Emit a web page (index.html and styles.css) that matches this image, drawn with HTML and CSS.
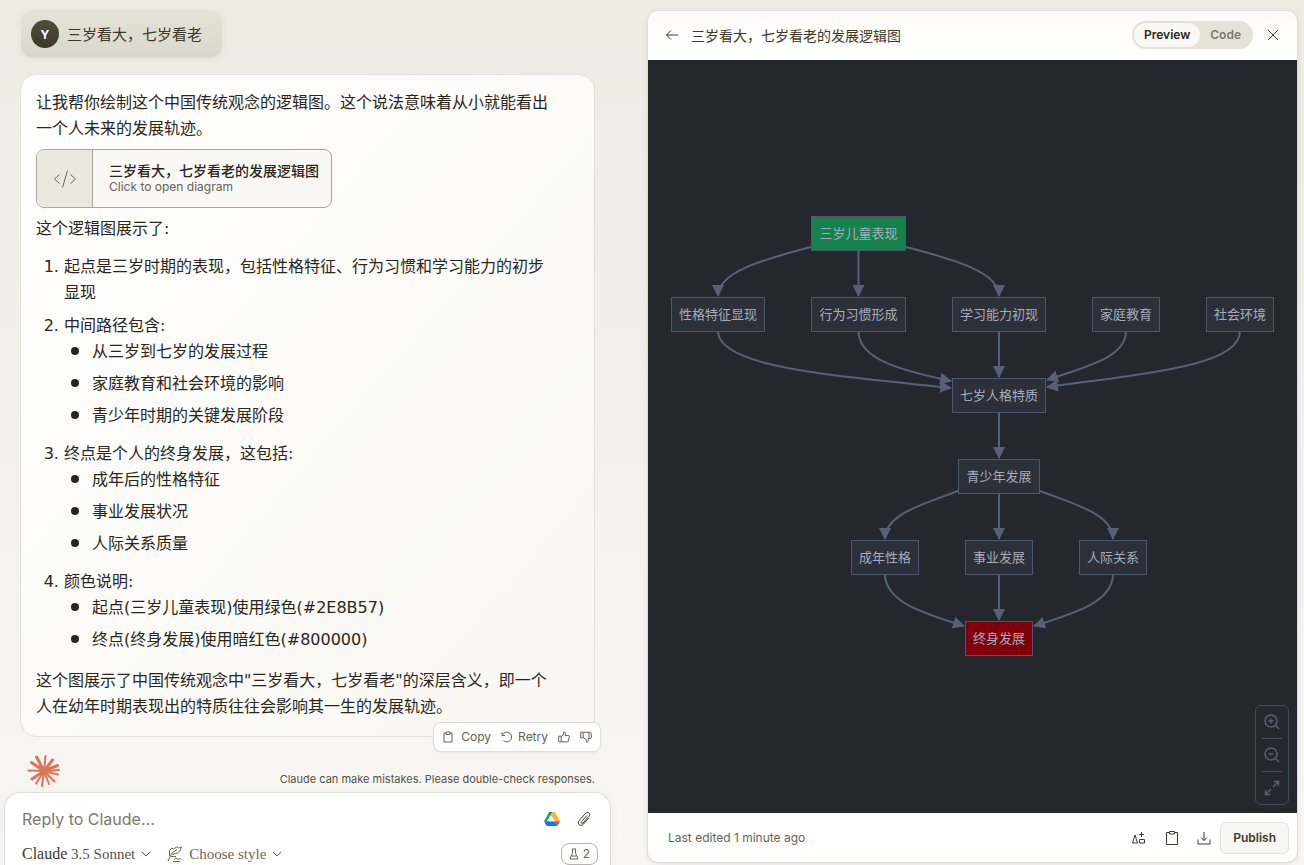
FILE: index.html
```html
<!DOCTYPE html>
<html lang="zh-CN">
<head>
<meta charset="utf-8">
<title>三岁看大，七岁看老</title>
<link rel="stylesheet" href="styles.css">
</head>
<body>
<div class="app">
  <main class="chat">
    <div class="thread">
      <div class="user-message"><span class="avatar">Y</span><span>三岁看大，七岁看老</span></div>
      <article class="reply">
        <p>让我帮你绘制这个中国传统观念的逻辑图。这个说法意味着从小就能看出一个人未来的发展轨迹。</p>
        <button class="artifact" type="button">
          <span class="artifact-icon">
            <svg width="24" height="20" viewBox="0 0 24 20"><path d="M6.500 5.500L1.500 10l5 4.500M17.500 5.500l5 4.500-5 4.500M14.500 1.500l-5 17"/></svg>
          </span>
          <span class="artifact-text"><strong>三岁看大，七岁看老的发展逻辑图</strong><small>Click to open diagram</small></span>
        </button>
        <p>这个逻辑图展示了:</p>
        <ol>
          <li>起点是三岁时期的表现，包括性格特征、行为习惯和学习能力的初步显现</li>
          <li>中间路径包含:
            <ul><li>从三岁到七岁的发展过程</li><li>家庭教育和社会环境的影响</li><li>青少年时期的关键发展阶段</li></ul>
          </li>
          <li>终点是个人的终身发展，这包括:
            <ul><li>成年后的性格特征</li><li>事业发展状况</li><li>人际关系质量</li></ul>
          </li>
          <li>颜色说明:
            <ul><li>起点(三岁儿童表现)使用绿色(#2E8B57)</li><li>终点(终身发展)使用暗红色(#800000)</li></ul>
          </li>
        </ol>
        <p>这个图展示了中国传统观念中"三岁看大，七岁看老"的深层含义，即一个人在幼年时期表现出的特质往往会影响其一生的发展轨迹。</p>
        <div class="actions">
          <button type="button"><svg width="12" height="12" viewBox="0 0 12 12"><path d="M4 2H2v9h8V2H8M4 1h4v2.500H4z"/></svg><span class="copy-label">Copy</span></button>
          <button type="button"><svg width="12" height="12" viewBox="0 0 12 12"><path d="M1 1.500V4.500h3M1.300 4.300A4.800 4.800 0 1 1 2.500 9.500"/></svg><span>Retry</span></button>
          <button type="button" aria-label="Good response"><svg width="12" height="12" viewBox="0 0 12 12"><path d="M.7 5.200h2.500v5.600H.7zM3.200 5.500l2-1.500.6-3c1.400-.2 1.900.8 1.700 1.800l-.4 1.700h3.600c.6 0 .8.400.6 1l-1 4.500c-.1.500-.4.800-1 .8H3.200"/></svg></button>
          <button type="button" aria-label="Bad response"><svg width="12" height="12" viewBox="0 0 12 12"><path d="M.7 1.200h2.500v5.600H.7zM3.200 1.300h6.500c.9 0 1.300.3 1.400 1l.4 4.200c0 .7-.3 1-.9 1H8.300v1.700c0 1.200-.5 2-1.600 2l-.8-2.800L3.200 6.700M9 1.300v6"/></svg></button>
        </div>
      </article>
      <div class="status">
        <svg class="burst" width="34" height="34" viewBox="-17 -17 34 34"><path class="thick" d="M0 0L-7.500-14M0 0L8.500-11M0 0L13.500-5.500M0 0L-12.500-8.500M0 0L-12 8"/><path d="M0 0L1.500-15M0 0L15-1M0 0L14 3.500M0 0L10.500 10.500M0 0L5 13M0 0L-2 15M0 0L-8 12.500M0 0L-15.500-.5"/></svg>
        <span>Claude can make mistakes. Please double-check responses.</span>
      </div>
    </div>
    <form class="composer">
      <div class="row">
        <input type="text" aria-label="Reply to Claude" placeholder="Reply to Claude...">
        <button type="button" aria-label="Add from Google Drive"><svg class="drive" width="16" height="14" viewBox="0 0 16 14"><path fill="#11a35a" d="M5.300 0h3L2.800 9.300 0 9.300z"/><path fill="#087c3c" d="M5.300 0h5.400L8 4.700z"/><path fill="#ffb52b" d="M10.700 0L16 9.300h-5.300L6.600 2.300 8 0z"/><path fill="#0877ff" d="M2.700 9.300h8L13.300 14H2.700L0 9.300z"/><path fill="#ee3d3a" d="M10.700 9.300H16L13.300 14z"/><path fill="#fff" d="M8 4.700l2.700 4.600H5.300z"/></svg></button>
        <button type="button" aria-label="Attach file"><svg class="clip" width="16" height="16" viewBox="0 0 16 16"><path d="M11 4.500L5.500 10.800c-.9 1.200.5 2.300 1.500 1.200l6-6.800c2-2.500-1.200-5.300-3.400-2.900L3.200 9.500c-2.700 3.200 1.400 6.800 4.200 3.600L13 6.800"/></svg></button>
      </div>
      <div class="row tools">
        <button type="button" class="model"><span><b>Claude</b> 3.5 Sonnet</span><svg width="10" height="6" viewBox="0 0 10 6"><path d="M1 1l4 4 4-4"/></svg></button>
        <button type="button" class="style"><svg width="16" height="16" viewBox="0 0 16 16"><path d="M1 15L5 7M2.500 10V4.500L5 2l1.500 1L10 .8 11.500 2 14.500 1l-1.500 4-3 2.500-5 .7M5 7l5-3.500M4 10.500h5M7 13.500l2-1.500 2 1.500 1.500-1 2 1M6 15.500h7"/></svg><span>Choose style</span><svg width="10" height="6" viewBox="0 0 10 6"><path d="M1 1l4 4 4-4"/></svg></button>
        <button type="button" class="flask"><svg width="10" height="12" viewBox="0 0 10 12"><path d="M3 1h4M3.500 1v4L1 11h8L6.500 5V1M2.500 8h5"/></svg><span>2</span></button>
      </div>
    </form>
  </main>

  <section class="panel">
    <header class="panel-head">
      <button type="button" aria-label="Back"><svg width="14" height="12" viewBox="0 0 14 12"><path d="M6 1.500L1.500 6 6 10.500M1.500 6H13"/></svg></button>
      <h1>三岁看大，七岁看老的发展逻辑图</h1>
      <div class="tabs"><button type="button" class="active">Preview</button><button type="button">Code</button></div>
      <button type="button" class="close" aria-label="Close"><svg width="12" height="12" viewBox="0 0 12 12"><path d="M1 1l10 10M11 1L1 11"/></svg></button>
    </header>
    <div class="canvas">
      <svg class="diagram" viewBox="0 0 649 753" role="img" aria-label="发展逻辑图">
        <defs><marker id="arrow" viewBox="0 0 12 12" refX="11" refY="6" markerWidth="12" markerHeight="12" markerUnits="userSpaceOnUse" orient="auto"><path d="M0 0L12 6 0 12z"/></marker></defs>
        <g class="edges">
          <path d="M163 187C118 199 70 211 70 236"/><path d="M210.500 190V236"/><path d="M258 187C303 199 351 211 351 236"/>
          <path d="M70 271C70 308 190 316 303 328"/><path d="M210.500 271C210.500 299 251 310 303 321"/><path d="M351 271V317"/><path d="M478 271C478 298 437 307 399 320"/><path d="M592 271C592 305 508 312 399 327"/>
          <path d="M351 352V398"/>
          <path d="M310 431C276 444 237 454 237 479"/><path d="M351 433V479"/><path d="M392 431C426 444 465 454 465 479"/>
          <path d="M237 514C237 542 275 553 316 566"/><path d="M351 514V560"/><path d="M465 514C465 542 427 553 386 566"/>
        </g>
        <g class="nodes">
          <rect class="start" x="163.500" y="156.500" width="94" height="34"/><text x="210.500" y="178">三岁儿童表现</text>
          <rect x="23.500" y="237.500" width="93" height="34"/><text x="70" y="259">性格特征显现</text>
          <rect x="163.500" y="237.500" width="94" height="34"/><text x="210.500" y="259">行为习惯形成</text>
          <rect x="304.500" y="237.500" width="93" height="34"/><text x="351" y="259">学习能力初现</text>
          <rect x="444.500" y="237.500" width="67" height="34"/><text x="478" y="259">家庭教育</text>
          <rect x="558.500" y="237.500" width="67" height="34"/><text x="592" y="259">社会环境</text>
          <rect x="304.500" y="318.500" width="93" height="34"/><text x="351" y="340">七岁人格特质</text>
          <rect x="310.500" y="399.500" width="81" height="34"/><text x="351" y="421">青少年发展</text>
          <rect x="203.500" y="480.500" width="67" height="34"/><text x="237" y="502">成年性格</text>
          <rect x="317.500" y="480.500" width="67" height="34"/><text x="351" y="502">事业发展</text>
          <rect x="431.500" y="480.500" width="67" height="34"/><text x="465" y="502">人际关系</text>
          <rect class="end" x="317.500" y="561.500" width="67" height="34"/><text x="351" y="583">终身发展</text>
        </g>
      </svg>
      <div class="zoom">
        <button type="button" aria-label="Zoom in"><svg width="16" height="16" viewBox="0 0 16 16"><path d="M13 7A6 6 0 1 1 1 7a6 6 0 0 1 12 0zM11.200 11.200L15 15M4.500 7h5M7 4.500v5"/></svg></button>
        <button type="button" aria-label="Zoom out"><svg width="16" height="16" viewBox="0 0 16 16"><path d="M13 7A6 6 0 1 1 1 7a6 6 0 0 1 12 0zM11.200 11.200L15 15M4.500 7h5"/></svg></button>
        <button type="button" aria-label="Fit to view"><svg width="16" height="16" viewBox="0 0 16 16"><path d="M10 1.500h4.500V6M14.500 1.500L9 7M6 14.500H1.500V10M1.500 14.500L7 9"/></svg></button>
      </div>
    </div>
    <footer class="panel-foot">
      <span>Last edited 1 minute ago</span>
      <button type="button" aria-label="Remix"><svg width="16" height="14" viewBox="0 0 16 14"><path d="M1.500 12L4 4l2.500 8zM10.500 1v5M8 3.500h5M8.500 8.500h5V12h-5z"/></svg></button>
      <button type="button" aria-label="Copy diagram"><svg width="14" height="16" viewBox="0 0 14 16"><path d="M4.500 2.500h-3v12h11v-12h-3M4.500 1.500h5v2.500h-5z"/></svg></button>
      <button type="button" aria-label="Download"><svg width="14" height="14" viewBox="0 0 14 14"><path d="M1 8.500V13h12V8.500M7 1v8.500M4 6.500l3 3 3-3"/></svg></button>
      <button type="button" class="publish">Publish</button>
    </footer>
  </section>
</div>
</body>
</html>
```
FILE: styles.css
```css
* { box-sizing: border-box; }
body {
  margin: 0;
  background: linear-gradient(#eeebe3, #f8f7f4);
  color: #29261b;
  font-family: "DejaVu Sans", "Noto Sans CJK SC", sans-serif;
}
button, input { font: inherit; color: inherit; border: 0; padding: 0; background: none; }
button { display: flex; align-items: center; cursor: pointer; }
svg { display: block; flex: none; fill: none; stroke: currentColor; }
p, ol, ul, h1 { margin: 0; }

.app {
  display: grid;
  grid-template-columns: 607fr 649fr;
  grid-template-rows: 100%;
  gap: 37px;
  height: 100vh;
  padding: 0 7px 0 4px;
}
.chat { display: flex; flex-direction: column; min-width: 0; }
.thread { padding: 10px 16px 0; }

.user-message {
  display: inline-flex;
  align-items: center;
  gap: 8px;
  height: 48px;
  margin-left: 1px;
  padding: 0 20px 0 10px;
  border-radius: 12px;
  background: linear-gradient(#e5e3d8, #dad8cb);
  box-shadow: 0 2px 8px rgba(80, 75, 50, 0.05);
  color: #3d3a2c;
  font: 15px/20px "Noto Sans CJK SC", sans-serif;
  vertical-align: top;
}
.avatar {
  display: grid;
  place-items: center;
  width: 28px;
  height: 28px;
  border-radius: 50%;
  background: linear-gradient(#504c3d, #3d3929);
  color: #fff;
  font: bold 12px Inter, sans-serif;
}

.reply {
  position: relative;
  margin-top: 16px;
  padding: 15px 44px 16px 15px;
  border: 1px solid #e3e1db;
  border-radius: 16px;
  background: linear-gradient(to bottom right, #fefefd, #f8f7f3);
  font-size: 16px;
  line-height: 26px;
}
.artifact {
  align-items: stretch;
  margin: 7px 0 8px;
  height: 59px;
  border: 1px solid #a9a69c;
  border-radius: 8px;
  background: #f9f8f4;
  overflow: hidden;
  text-align: left;
}
.artifact-icon {
  display: grid;
  place-items: center;
  width: 56px;
  border-right: 1px solid #a9a69c;
  background: #ebe8e0;
  color: #6b6758;
}
.artifact-text {
  display: flex;
  flex-direction: column;
  justify-content: center;
  padding: 0 12px 2px 16px;
}
.artifact strong { font: 500 14px/18px "Noto Sans CJK SC", sans-serif; }
.artifact small { font: 12px/16px Inter, sans-serif; color: #656358; }

ol { margin: 12px 0 15px; padding-left: 28px; }
ul { margin-bottom: 12px; padding-left: 7px; list-style: none; }
ul > li { display: flex; gap: 13px; }
ul > li::before {
  content: "";
  flex: none;
  width: 8px;
  height: 8px;
  margin-top: 8px;
  border-radius: 50%;
  background: #29261b;
}
ul > li + li { margin-top: 6px; }
ol > li + li { margin-top: 7px; }
ol > li:last-child > ul { margin-bottom: 0; }

.actions {
  position: absolute;
  right: -7px;
  bottom: -16px;
  display: flex;
  align-items: center;
  gap: 10px;
  height: 30px;
  padding: 0 8px;
  border: 1px solid #dedcd6;
  border-radius: 8px;
  background: #fff;
  box-shadow: 0 1px 3px rgba(0, 0, 0, 0.05);
  color: #656358;
  font: 12px/16px Inter, sans-serif;
}
.actions button { gap: 5px; }
.copy-label { padding-left: 2px; }

.status {
  display: flex;
  justify-content: space-between;
  align-items: flex-end;
  height: 51px;
  padding: 0 0 0 7px;
  color: #535146;
  font: 11px/16px Inter, sans-serif;
}
.status span { padding-bottom: 1px; }
.burst { color: #de7356; stroke-width: 2; stroke-linecap: round; }
.burst .thick { stroke-width: 3; }

.composer {
  flex: 1;
  margin-top: 4px;
  padding: 11px 12px 0 17px;
  border: 1px solid #dedcd6;
  border-bottom: 0;
  border-radius: 16px 16px 0 0;
  background: #fff;
  box-shadow: 0 2px 12px rgba(0, 0, 0, 0.04);
}
.row { display: flex; align-items: center; gap: 16px; height: 30px; padding-right: 6px; }
.row input { flex: 1; min-width: 0; outline: 0; font: 16px/24px Inter, sans-serif; }
.row input::placeholder { color: #7b796c; opacity: 1; }
.drive { stroke: none; }
.clip { color: #3d3a2c; }
.tools { margin-top: 5px; padding: 0; color: #6b6758; font: 15px/20px "Liberation Serif", serif; }
.tools button { gap: 6px; }
.model { color: #535146; }
.model b { color: #3d3a2c; font-size: 16px; font-weight: 400; }
.tools .flask {
  gap: 4px;
  height: 22px;
  margin-left: auto;
  padding: 0 7px;
  border: 1px solid #b5b3aa;
  border-radius: 8px;
  font: 12px/16px Inter, sans-serif;
}

.panel {
  display: flex;
  flex-direction: column;
  margin: 11px 0 3px;
  min-width: 0;
  border-radius: 10px;
  overflow: hidden;
  background: #fff;
  box-shadow: 0 0 0 1px #e0ddd5, 0 2px 6px rgba(0, 0, 0, 0.1);
  font-family: Inter, sans-serif;
}
.panel-head {
  display: flex;
  flex: none;
  align-items: center;
  height: 49px;
  padding: 0 18px 2px 17px;
  background: linear-gradient(#fbfaf8, #fff);
  color: #3d3a2c;
}
.panel-head h1 { flex: 1; margin-left: 12px; font: 14px/20px "Noto Sans CJK SC", sans-serif; }
.tabs { display: flex; padding: 2px; border-radius: 14px; background: #e5e3d8; }
.tabs button {
  height: 24px;
  padding: 0 10px;
  border-radius: 12px;
  color: #7b796c;
  font-size: 12px;
  font-weight: 600;
}
.tabs .active { background: #f9f8f5; color: #29261b; }
.close { margin-left: 14px; }
.canvas { position: relative; flex: 1; min-height: 0; background: #24272e; }
.diagram { width: 100%; height: 100%; }
.edges { stroke: #566176; stroke-width: 2; }
.edges path { marker-end: url(#arrow); }
#arrow path { fill: #566176; stroke: none; }
.nodes rect { fill: #2c3038; stroke: #4b576a; }
.nodes .start { fill: #17814e; }
.nodes .end { fill: #80000b; }
.nodes text { fill: #a5adba; stroke: none; font: 13px "Noto Sans CJK SC", sans-serif; text-anchor: middle; }
.zoom {
  position: absolute;
  right: 8px;
  bottom: 8px;
  padding: 0 6px;
  border: 1px solid #414b5b;
  border-radius: 6px;
  color: #566176;
}
.zoom svg { stroke-width: 1.5; }
.zoom button { height: 32px; padding: 0 2px; }
.zoom button + button { border-top: 1px solid #414b5b; height: 33px; }
.panel-foot {
  display: flex;
  flex: none;
  align-items: center;
  gap: 18px;
  height: 49px;
  padding: 0 8px 0 20px;
  color: #3d3a2c;
  font-size: 12px;
}
.panel-foot span { flex: 1; color: #656358; }
.publish {
  height: 32px;
  margin-left: -9px;
  padding: 0 12px;
  border: 1px solid #e3e1db;
  border-radius: 6px;
  background: #f7f6f2;
  font-size: 12px;
  font-weight: 600;
}
```
